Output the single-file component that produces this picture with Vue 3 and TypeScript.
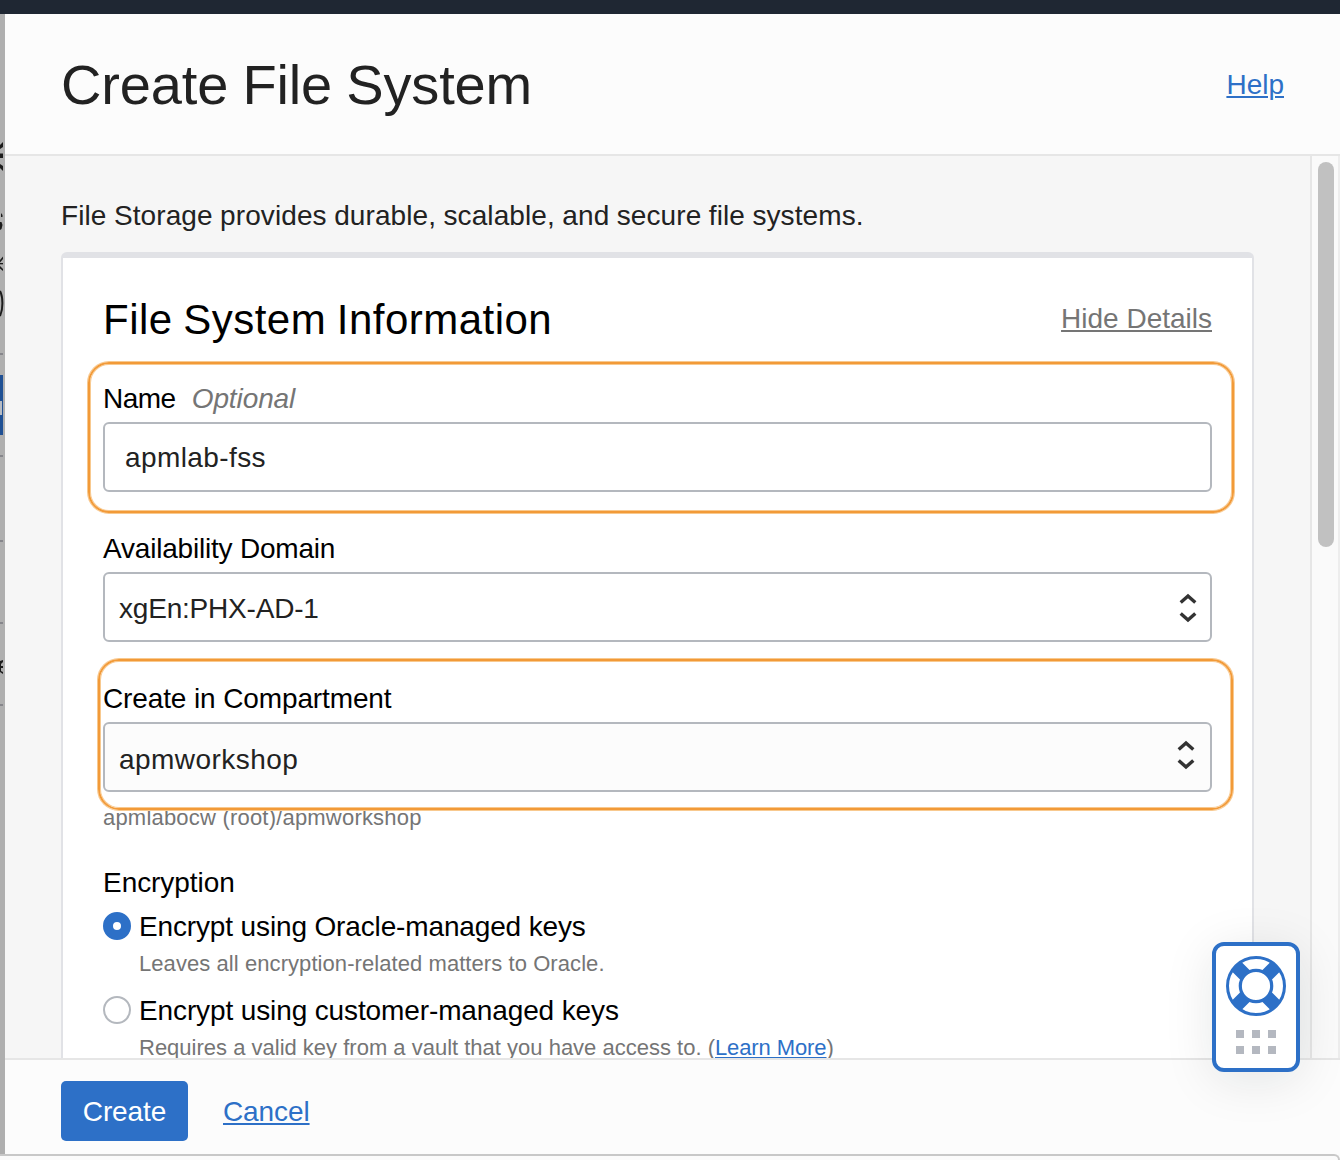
<script setup lang="ts">
import { ref } from 'vue'

interface KeyOption {
  id: string
  label: string
  hint: string
  tracking: string
  hintTracking: string
  link?: string
}

const options: KeyOption[] = [
  {
    id: 'oracle',
    label: 'Encrypt using Oracle-managed keys',
    hint: 'Leaves all encryption-related matters to Oracle.',
    tracking: '-0.14px',
    hintTracking: '0.07px',
  },
  {
    id: 'customer',
    label: 'Encrypt using customer-managed keys',
    hint: 'Requires a valid key from a vault that you have access to.',
    tracking: '-0.12px',
    hintTracking: '0px',
    link: 'Learn More',
  },
]

const selected = ref('oracle')
const name = ref('apmlab-fss')
</script>

<template>
  <div class="screen">
    <div class="topbar"></div>
    <div class="stage">
      <svg class="backdrop" width="5" height="1140" viewBox="0 14 5 1140" aria-hidden="true">
        <g fill="#1c1c1c">
          <path d="M0 145 L3 142 V147 L0 149Z" />
          <rect x="0" y="153.5" width="3" height="4.5" />
          <path d="M0 164 L3 166 V171 L0 168Z" />
          <path d="M1 213 L2.5 215 V217 H1Z" />
          <path d="M0 222 H1.5 L2.5 225 L1.5 229 L0 230Z" />
          <path d="M0 260 L3 256.5 V259 L0 262.5Z" />
          <rect x="0" y="263" width="3" height="1.3" />
          <path d="M0 266 L3 269 V271 L0 268.5Z" />
          <path d="M0 661 L3 660 V662 L1 664 V666 H3 V668 H1 V671 L3 672 V674 L0 672Z" />
        </g>
        <path d="M0 291 C3.2 297 3.2 309 0 316" fill="none" stroke="#1c1c1c" stroke-width="2" />
        <g fill="#86868b">
          <rect x="0" y="353" width="3" height="2" />
          <rect x="0" y="455" width="3" height="2" />
          <rect x="0" y="540" width="3" height="2" />
          <rect x="0" y="622" width="3" height="2" />
          <rect x="0" y="704" width="3" height="2" />
        </g>
        <rect x="0" y="375" width="3" height="60" fill="#1f5094" />
        <rect x="0" y="401" width="2" height="14" fill="#b7bcc4" />
      </svg>

      <section class="panel">
        <header class="panel-head">
          <h1>Create File System</h1>
          <a class="link">Help</a>
        </header>

        <div class="panel-body">
          <div class="content">
            <p class="intro">File Storage provides durable, scalable, and secure file systems.</p>

            <div class="card">
              <div class="card-head">
                <h2>File System Information</h2>
                <a class="hide">Hide Details</a>
              </div>

              <div class="field name-field">
                <div class="label"><span class="name">Name</span><em>Optional</em></div>
                <div class="control text-control"><span>{{ name }}</span></div>
                <div class="marker marker-name"></div>
              </div>

              <div class="field">
                <div class="label domain">Availability Domain</div>
                <div class="control">
                  <span class="ad">xgEn:PHX-AD-1</span>
                  <svg class="chev" width="20" height="32" viewBox="-10 -16 20 32">
                    <path d="M-7.3 -5.5 L0 -12 L7.3 -5.5 M-7.3 5.5 L0 12 L7.3 5.5" />
                  </svg>
                </div>
              </div>

              <div class="field">
                <div class="label compartment">Create in Compartment</div>
                <div class="control shaded">
                  <span class="ws">apmworkshop</span>
                  <svg class="chev" width="20" height="32" viewBox="-10 -16 20 32">
                    <path d="M-7.3 -5.5 L0 -12 L7.3 -5.5 M-7.3 5.5 L0 12 L7.3 5.5" />
                  </svg>
                </div>
                <div class="marker marker-compartment"></div>
              </div>
              <div class="path">apmlabocw (root)/apmworkshop</div>

              <div class="enc">Encryption</div>
              <div v-for="o in options" :key="o.id" class="option" @click="selected = o.id">
                <span class="radio" :class="{ on: selected === o.id }"></span>
                <div class="option-text">
                  <div class="option-label" :style="{ letterSpacing: o.tracking }">{{ o.label }}</div>
                  <div class="option-hint" :style="{ letterSpacing: o.hintTracking }">
                    {{ o.hint }}<template v-if="o.link"> (<a class="more">{{ o.link }}</a>)</template>
                  </div>
                </div>
              </div>
            </div>
          </div>
          <div class="scroll"><div class="thumb"></div></div>
        </div>

        <footer class="panel-foot">
          <button class="create">Create</button>
          <a class="link">Cancel</a>
        </footer>
      </section>
    </div>
    <div class="edge"></div>

    <div class="support">
      <svg width="60" height="60" viewBox="-30 -30 60 60">
        <circle r="28.5" fill="#fff" stroke="#2d70c7" stroke-width="3" />
        <path
          d="M-20 -20 L-10.5 -10.5 M20 -20 L10.5 -10.5 M-20 20 L-10.5 10.5 M20 20 L10.5 10.5"
          stroke="#2d70c7"
          stroke-width="13.5"
        />
        <circle r="15.7" fill="#fff" stroke="#2d70c7" stroke-width="3.2" />
      </svg>
      <div class="grip"><i v-for="n in 6" :key="n"></i></div>
    </div>
  </div>
</template>

<style>
body {
  margin: 0;
}
</style>

<style scoped>
.screen {
  position: relative;
  width: 1340px;
  height: 1160px;
  overflow: hidden;
  display: flex;
  flex-direction: column;
  background: #fbfbfb;
  font-family: "Liberation Sans", Arial, sans-serif;
  font-size: 28px;
  line-height: 32px;
  color: #000;
}
.screen * {
  box-sizing: border-box;
}
.topbar {
  height: 14px;
  flex: none;
  background: #1f2733;
}
.stage {
  height: 1140px;
  flex: none;
  display: flex;
}
.backdrop {
  flex: none;
  display: block;
  background: #afafaf;
}
.panel {
  flex: 1;
  display: flex;
  flex-direction: column;
}
.panel-head {
  height: 142px;
  flex: none;
  padding: 2px 56px 0;
  display: flex;
  align-items: center;
  justify-content: space-between;
  background: #fcfcfc;
  border-bottom: 2px solid #e6e6e6;
}
h1,
h2,
p {
  margin: 0;
  font-weight: 400;
}
h1 {
  font-size: 56px;
  line-height: 64px;
  letter-spacing: -0.15px;
  word-spacing: -1.2px;
  color: #222;
}
.link {
  color: #2d70c7;
  text-decoration: underline;
  text-decoration-thickness: 2px;
  text-underline-offset: 2px;
}
.panel-body {
  height: 902px;
  flex: none;
  display: flex;
  overflow: hidden;
  background: #f6f6f6;
}
.content {
  width: 1305px;
  padding: 44px 56px 0;
}
.intro {
  color: #222;
  height: 52px;
  letter-spacing: 0.09px;
  word-spacing: -0.4px;
}
.card {
  width: 1193px;
  height: 900px;
  padding: 37px 40px 0;
  background: #fff;
  border: 2px solid #e1e2e6;
  border-top-width: 6px;
  border-radius: 6px;
}
.card-head {
  height: 88px;
  display: flex;
  justify-content: space-between;
}
h2 {
  font-size: 42px;
  line-height: 50px;
  letter-spacing: 0.48px;
  word-spacing: -1.5px;
}
.hide {
  margin-top: 8px;
  color: #757575;
  text-decoration: underline;
  text-decoration-thickness: 2px;
  text-underline-offset: 2px;
}
.field {
  position: relative;
  height: 150px;
}
.label {
  height: 39px;
}
.name {
  letter-spacing: -0.5px;
}
.label em {
  margin-left: 16px;
  color: #757575;
  letter-spacing: -0.1px;
}
.domain {
  letter-spacing: -0.2px;
}
.compartment {
  letter-spacing: -0.12px;
}
.control {
  height: 70px;
  padding: 2px 12px 0 14px;
  display: flex;
  align-items: center;
  justify-content: space-between;
  border: 2px solid #b4b8be;
  border-radius: 6px;
  color: #222;
}
.text-control {
  padding: 2px 20px 0;
  letter-spacing: 0.4px;
}
.shaded {
  background: #fcfcfc;
  padding: 6px 14px 0 14px;
}
.ad {
  margin-top: 2px;
  letter-spacing: -0.2px;
}
.ws {
  letter-spacing: 0.45px;
}
.chev path {
  fill: none;
  stroke: #333;
  stroke-width: 3.4;
}
.shaded .chev {
  margin-top: -10px;
}
.marker {
  position: absolute;
  border: 2px solid #f29a38;
  border-radius: 21px;
  box-shadow: 0 0 0 1px #f8c98f, inset 0 0 0 1px #f8c98f;
  pointer-events: none;
}
.marker-name {
  left: -15px;
  top: -21px;
  width: 1146px;
  height: 151px;
}
.marker-compartment {
  left: -5px;
  top: -24px;
  width: 1135px;
  height: 151px;
}
.path {
  margin-top: -28px;
  height: 62px;
  font-size: 22px;
  line-height: 26px;
  letter-spacing: 0.2px;
  color: #757575;
}
.enc {
  height: 44px;
  letter-spacing: -0.05px;
}
.option {
  display: flex;
  height: 84px;
}
.radio {
  width: 28px;
  height: 28px;
  flex: none;
  margin: 1px 8px 0 0;
  border: 2px solid #b4b8be;
  border-radius: 50%;
  background: #fff;
}
.radio.on {
  border: 10px solid #2d70c7;
}
.option-label {
  height: 40px;
}
.option-hint {
  font-size: 22px;
  line-height: 26px;
  color: #757575;
  white-space: nowrap;
}
.more {
  color: #2d70c7;
  letter-spacing: -0.1px;
  text-decoration: underline;
  text-decoration-thickness: 1px;
  text-underline-offset: 2px;
}
.scroll {
  flex: 1;
  padding: 6px 4px 0 6px;
  background: #fafafa;
  border-left: 2px solid #e6e6e6;
  border-right: 2px solid #ededed;
}
.thumb {
  height: 385px;
  border-radius: 8px;
  background: #c1c1c1;
}
.panel-foot {
  flex: 1;
  display: flex;
  align-items: flex-start;
  gap: 35px;
  padding: 21px 56px 0;
  background: #fcfcfc;
  border-top: 2px solid #e6e6e6;
}
.panel-foot .link {
  margin-top: 15px;
  letter-spacing: -0.1px;
}
.create {
  width: 127px;
  height: 60px;
  padding: 2px 0 0;
  border: 0;
  border-radius: 5px;
  background: #2d70c7;
  color: #fff;
  font: inherit;
  letter-spacing: -0.1px;
}
.edge {
  flex: 1;
  border-top: 2px solid #c8c8c8;
  border-right: 2px solid #c8c8c8;
  border-top-right-radius: 10px;
}
.support {
  position: absolute;
  left: 1212px;
  top: 942px;
  width: 88px;
  height: 130px;
  padding-top: 10px;
  display: flex;
  flex-direction: column;
  align-items: center;
  background: #fff;
  border: 4px solid #2d70c7;
  border-radius: 12px;
  box-shadow: 0 8px 50px rgba(20, 30, 30, 0.1);
}
.grip {
  margin-top: 14px;
  display: grid;
  grid-template-columns: repeat(3, 8px);
  gap: 8px;
}
.grip i {
  height: 8px;
  background: #b4b8c0;
}
</style>
